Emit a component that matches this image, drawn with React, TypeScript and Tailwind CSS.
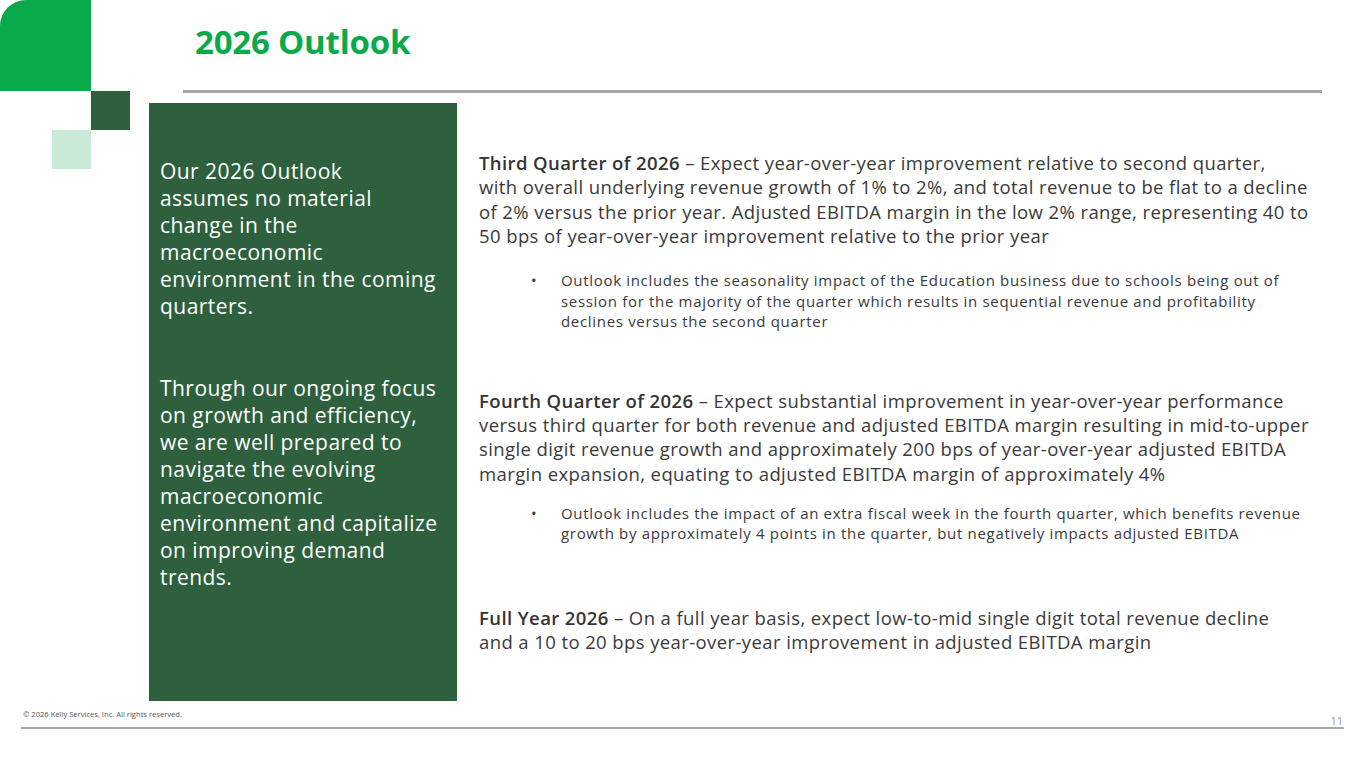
const font = { fontFamily: "'Open Sans', Lato, sans-serif" };

const Corner = () => (
	<div className="grid grid-cols-[52px_39px_39px] grid-rows-[91px_39px_39px]">
		<div className="col-span-2 bg-[#0aaa4a] rounded-tl-[26px]" />
		<div />
		<div />
		<div />
		<div className="bg-[#2e603e]" />
		<div />
		<div className="bg-[#c9ead7]" />
		<div />
	</div>
);

const Bullet = ({ children }: { children: React.ReactNode }) => (
	<div className="flex text-[15px] leading-[20.5px] tracking-[0.68px] text-[#3a3a3a]">
		<span className="w-[82px] shrink-0 pl-[52px]">•</span>
		<p className="whitespace-nowrap">{children}</p>
	</div>
);

const Lead = ({ children }: { children: React.ReactNode }) => (
	<span className="font-semibold text-[#333]">{children}</span>
);

export default function App() {
	return (
		<div className="w-[1365px] h-[768px] bg-white flex flex-col overflow-hidden" style={font}>
			<div className="flex h-[701px]">
				<div className="w-[149px] shrink-0">
					<Corner />
				</div>
				<div className="flex-1 flex flex-col">
					<div className="h-[90px] pl-[46px] pt-[22px]">
						<h1 className="text-[33px] leading-[40px] font-bold text-[#0aaa4a] tracking-[-0.2px]">2026 Outlook</h1>
					</div>
					<div className="ml-[34px] mr-[43px] h-[3px] bg-[#a8a5a8]" />
					<div className="flex flex-1 mt-[10px]">
						<div className="w-[308px] shrink-0 bg-[#2e603e] text-white text-[21px] leading-[27px] tracking-[0.45px] pl-[11px] pt-[55px]">
							<p className="whitespace-nowrap">
								Our 2026 Outlook
								<br />
								assumes no material
								<br />
								change in the
								<br />
								macroeconomic
								<br />
								environment in the coming
								<br />
								quarters.
							</p>
							<p className="whitespace-nowrap mt-[55px]">
								Through our ongoing focus
								<br />
								on growth and efficiency,
								<br />
								we are well prepared to
								<br />
								navigate the evolving
								<br />
								macroeconomic
								<br />
								environment and capitalize
								<br />
								on improving demand
								<br />
								trends.
							</p>
						</div>
						<div className="flex-1 pl-[22px] pt-[48px] text-[#3a3a3a] tracking-[0.4px]">
							<p className="text-[18.5px] leading-[24.3px] whitespace-nowrap">
								<Lead>Third Quarter of 2026</Lead> – Expect year-over-year improvement relative to second quarter,
								<br />
								with overall underlying revenue growth of 1% to 2%, and total revenue to be flat to a decline
								<br />
								of 2% versus the prior year. Adjusted EBITDA margin in the low 2% range, representing 40 to
								<br />
								50 bps of year-over-year improvement relative to the prior year
							</p>
							<div className="mt-[22px]">
								<Bullet>
									Outlook includes the seasonality impact of the Education business due to schools being out of
									<br />
									session for the majority of the quarter which results in sequential revenue and profitability
									<br />
									declines versus the second quarter
								</Bullet>
							</div>
							<p className="mt-[57px] text-[18.5px] leading-[24.3px] whitespace-nowrap">
								<Lead>Fourth Quarter of 2026</Lead> – Expect substantial improvement in year-over-year performance
								<br />
								versus third quarter for both revenue and adjusted EBITDA margin resulting in mid-to-upper
								<br />
								single digit revenue growth and approximately 200 bps of year-over-year adjusted EBITDA
								<br />
								margin expansion, equating to adjusted EBITDA margin of approximately 4%
							</p>
							<div className="mt-[17px]">
								<Bullet>
									Outlook includes the impact of an extra fiscal week in the fourth quarter, which benefits revenue
									<br />
									growth by approximately 4 points in the quarter, but negatively impacts adjusted EBITDA
								</Bullet>
							</div>
							<p className="mt-[62px] text-[18.5px] leading-[24.3px] whitespace-nowrap">
								<Lead>Full Year 2026</Lead> – On a full year basis, expect low-to-mid single digit total revenue decline
								<br />
								and a 10 to 20 bps year-over-year improvement in adjusted EBITDA margin
							</p>
						</div>
					</div>
				</div>
			</div>
			<div className="px-[21px] pt-[8px]">
				<div className="flex items-end justify-between pl-[2px]">
					<span className="text-[7.6px] leading-[10px] text-[#555] mb-[8px]">© 2026 Kelly Services, Inc. All rights reserved.</span>
					<span className="text-[11px] leading-[12px] text-[#9a9a9a] pr-[1px]">11</span>
				</div>
				<div className="h-[2px] bg-[#a8a8a8]" />
			</div>
		</div>
	);
}
